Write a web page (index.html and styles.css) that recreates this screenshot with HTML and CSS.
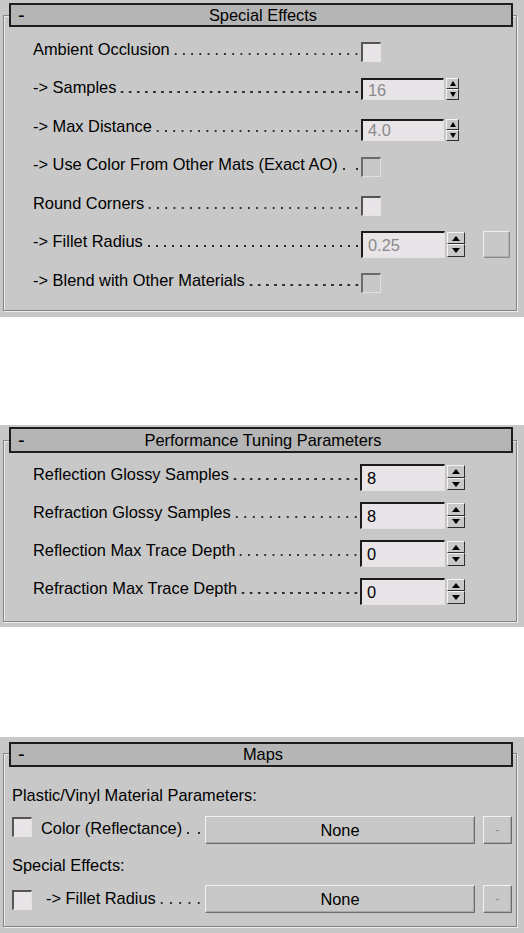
FILE: index.html
```html
<!DOCTYPE html>
<html>
<head>
<meta charset="utf-8">
<title>Rollouts</title>
<link rel="stylesheet" href="styles.css">
</head>
<body>

<section class="rollout fx">
  <div class="frame">
    <div class="hdr"><span class="tog">-</span><span class="ttl">Special Effects</span><span></span></div>
    <div class="rows">
      <div class="row">
        <div class="lbl"><span>Ambient Occlusion</span><span class="lead"></span></div>
        <span class="chk"></span>
      </div>
      <div class="row">
        <div class="lbl"><span>-&gt; Samples</span><span class="lead"></span></div>
        <div class="spin sm s-up"><span class="field dim">16</span><span class="arrows"><span class="arr up"></span><span class="arr dn"></span></span></div>
      </div>
      <div class="row">
        <div class="lbl"><span>-&gt; Max Distance</span><span class="lead"></span></div>
        <div class="spin sm s-dn"><span class="field dim">4.0</span><span class="arrows"><span class="arr up"></span><span class="arr dn"></span></span></div>
      </div>
      <div class="row">
        <div class="lbl"><span>-&gt; Use Color From Other Mats (Exact AO)</span><span class="lead"></span></div>
        <span class="chk off"></span>
      </div>
      <div class="row">
        <div class="lbl"><span>Round Corners</span><span class="lead"></span></div>
        <span class="chk"></span>
      </div>
      <div class="row">
        <div class="lbl"><span>-&gt; Fillet Radius</span><span class="lead"></span></div>
        <div class="spin big"><span class="field dim">0.25</span><span class="arrows"><span class="arr up"></span><span class="arr dn"></span></span></div>
        <span class="sq"></span>
      </div>
      <div class="row">
        <div class="lbl"><span>-&gt; Blend with Other Materials</span><span class="lead"></span></div>
        <span class="chk off"></span>
      </div>
    </div>
  </div>
</section>

<section class="rollout perf">
  <div class="frame">
    <div class="hdr"><span class="tog">-</span><span class="ttl">Performance Tuning Parameters</span><span></span></div>
    <div class="rows">
      <div class="row">
        <div class="lbl"><span>Reflection Glossy Samples</span><span class="lead"></span></div>
        <div class="spin big"><span class="field">8</span><span class="arrows"><span class="arr up"></span><span class="arr dn"></span></span></div>
      </div>
      <div class="row">
        <div class="lbl"><span>Refraction Glossy Samples</span><span class="lead"></span></div>
        <div class="spin big"><span class="field">8</span><span class="arrows"><span class="arr up"></span><span class="arr dn"></span></span></div>
      </div>
      <div class="row">
        <div class="lbl"><span>Reflection Max Trace Depth</span><span class="lead"></span></div>
        <div class="spin big"><span class="field">0</span><span class="arrows"><span class="arr up"></span><span class="arr dn"></span></span></div>
      </div>
      <div class="row">
        <div class="lbl"><span>Refraction Max Trace Depth</span><span class="lead"></span></div>
        <div class="spin big"><span class="field">0</span><span class="arrows"><span class="arr up"></span><span class="arr dn"></span></span></div>
      </div>
    </div>
  </div>
</section>

<section class="rollout maps">
  <div class="frame">
    <div class="hdr"><span class="tog">-</span><span class="ttl">Maps</span><span></span></div>
    <div class="mbody">
      <div class="sect s1">Plastic/Vinyl Material Parameters:</div>
      <div class="mrow r1">
        <span class="chk"></span>
        <div class="mlbl"><span>Color (Reflectance)</span><span class="lead"></span></div>
        <span class="btn">None</span>
        <span class="btn mini">-</span>
      </div>
      <div class="sect s2">Special Effects:</div>
      <div class="mrow r2">
        <span class="chk"></span>
        <div class="mlbl ind"><span>-&gt; Fillet Radius</span><span class="lead"></span></div>
        <span class="btn">None</span>
        <span class="btn mini">-</span>
      </div>
    </div>
  </div>
</section>

</body>
</html>
```

FILE: styles.css
```css
* { box-sizing: border-box; }

html, body {
  margin: 0;
  padding: 0;
  background: #ffffff;
}

body {
  font-family: "Liberation Sans", Arial, sans-serif;
  font-size: 16.4px;
  color: #000;
  width: 524px;
}

/* ---------- rollout panel ---------- */
.rollout {
  background: #c8c8c8;
  padding: 15px 7px 6px 3px;
}
.rollout.perf { margin-top: 108px; padding-bottom: 5px; }
.rollout.maps { margin-top: 110px; padding-top: 16px; }

.frame {
  border: 1px solid #858585;
  box-shadow: inset 1px 1px 0 #ececec, 1px 1px 0 #ececec;
}

.hdr {
  margin: -13px 3px 0 5px;
  height: 24px;
  border: 2px solid #1e1e1e;
  background: #b5b5b5;
  display: grid;
  grid-template-columns: 1fr auto 1fr;
  align-items: center;
  white-space: nowrap;
}
.perf .hdr { margin-top: -14px; height: 26px; }
.maps .hdr { margin-top: -12px; height: 25px; }

.tog {
  padding-left: 7px;
  font-size: 20px;
  line-height: 1;
}
.ttl { line-height: 1; padding-left: 4px; }

/* ---------- label rows ---------- */
.rows { padding: 3px 0 10.5px 0; }
.perf .rows { padding-bottom: 13.8px; }

.row {
  display: flex;
  align-items: center;
  height: 38.5px;
  padding-left: 29px;
}
.perf .row { height: 37.8px; }

.lbl {
  display: flex;
  align-items: baseline;
  width: 328px;
  white-space: nowrap;
}
.perf .lbl { width: 327px; }

/* leader dots: one dot centred in each 8px tile, spread edge to edge */
.lead {
  flex: 1;
  height: 2px;
  margin-left: 2px;
  background-image: linear-gradient(90deg, transparent 3px, #2e2e2e 3px, #2e2e2e 5px, transparent 5px);
  background-size: 8px 2px;
  background-repeat: space no-repeat;
  background-position: left bottom;
}

/* ---------- checkbox ---------- */
.chk {
  display: block;
  flex: none;
  width: 20px;
  height: 20px;
  border-style: solid;
  border-width: 2px 1px 1px 2px;
  border-color: #555555 #e2e2e2 #e2e2e2 #555555;
  background: #e8e4e8;
  margin-top: 5px;
}
.chk.off {
  background: #c8c8c8;
  border-color: #6a6a6a #e0e0e0 #e0e0e0 #6a6a6a;
}

/* ---------- spinner ---------- */
.spin {
  display: flex;
  align-items: center;
  gap: 2px;
  margin-top: 5px;
}
.spin.s-up { margin-top: 3px; }
.spin.s-dn { margin-top: 7px; }
.perf .spin { margin-top: 6px; }

.field {
  display: flex;
  align-items: center;
  width: 83px;
  height: 22px;
  padding-left: 5px;
  border-style: solid;
  border-width: 2px 1px 1px 2px;
  border-color: #1c1c1c #e2e2e2 #e2e2e2 #1c1c1c;
  background: #e8e4e8;
  color: #000;
  line-height: 1;
}
.field.dim { color: #8a8a8a; }
.big .field { width: 84px; height: 27px; }
.perf .big .field { width: 85px; }

.arrows {
  display: flex;
  flex-direction: column;
  width: 13px;
  height: 22px;
}
.big .arrows { width: 18px; height: 25px; }

.arr {
  flex: 1;
  display: flex;
  align-items: center;
  justify-content: center;
  background: #c8c8c8;
  border: 1px solid;
  border-color: #f4f4f4 #2e2e2e #2e2e2e #f4f4f4;
}
.arr.up::before {
  content: "";
  border-left: 3.5px solid transparent;
  border-right: 3.5px solid transparent;
  border-bottom: 5px solid #000;
}
.arr.dn::before {
  content: "";
  border-left: 3.5px solid transparent;
  border-right: 3.5px solid transparent;
  border-top: 5px solid #000;
}
.big .arr.up::before,
.big .arr.dn::before {
  border-left-width: 4px;
  border-right-width: 4px;
}

.sq {
  display: block;
  width: 27px;
  height: 27px;
  margin: 5px 0 0 18px;
  border: 1px solid;
  border-color: #efefef #8a8a8a #8a8a8a #efefef;
  box-shadow: inset -1px -1px 0 #b0b0b0;
}

/* ---------- maps ---------- */
.mbody { padding: 14px 4px 13px 8px; }

.sect {
  display: flex;
  align-items: center;
  height: 30px;
  white-space: nowrap;
}
.sect.s2 { height: 38px; }

.mrow {
  display: flex;
  align-items: center;
  height: 36px;
}
.mrow.r2 { height: 28px; }

.mrow .chk { margin: 0 0 3px 0; }
.mrow.r2 .chk { margin: 2px 0 0 0; }

.mlbl {
  display: flex;
  align-items: baseline;
  width: 162px;
  margin: 0 2px 0 9px;
  white-space: nowrap;
}
.mlbl.ind { padding-left: 5px; }

.btn {
  display: flex;
  align-items: center;
  justify-content: center;
  flex: none;
  width: 270px;
  height: 28px;
  border: 1px solid;
  border-color: #f2f2f2 #6c6c6c #6c6c6c #f2f2f2;
  box-shadow: inset -1px -1px 0 #a8a8a8;
  background: #c8c8c8;
  line-height: 1;
}
.mrow.r1 .btn { margin-top: 2px; }
.btn.mini {
  width: 29px;
  margin-left: 8px;
  color: #8a8a8a;
  font-size: 13px;
}
```
